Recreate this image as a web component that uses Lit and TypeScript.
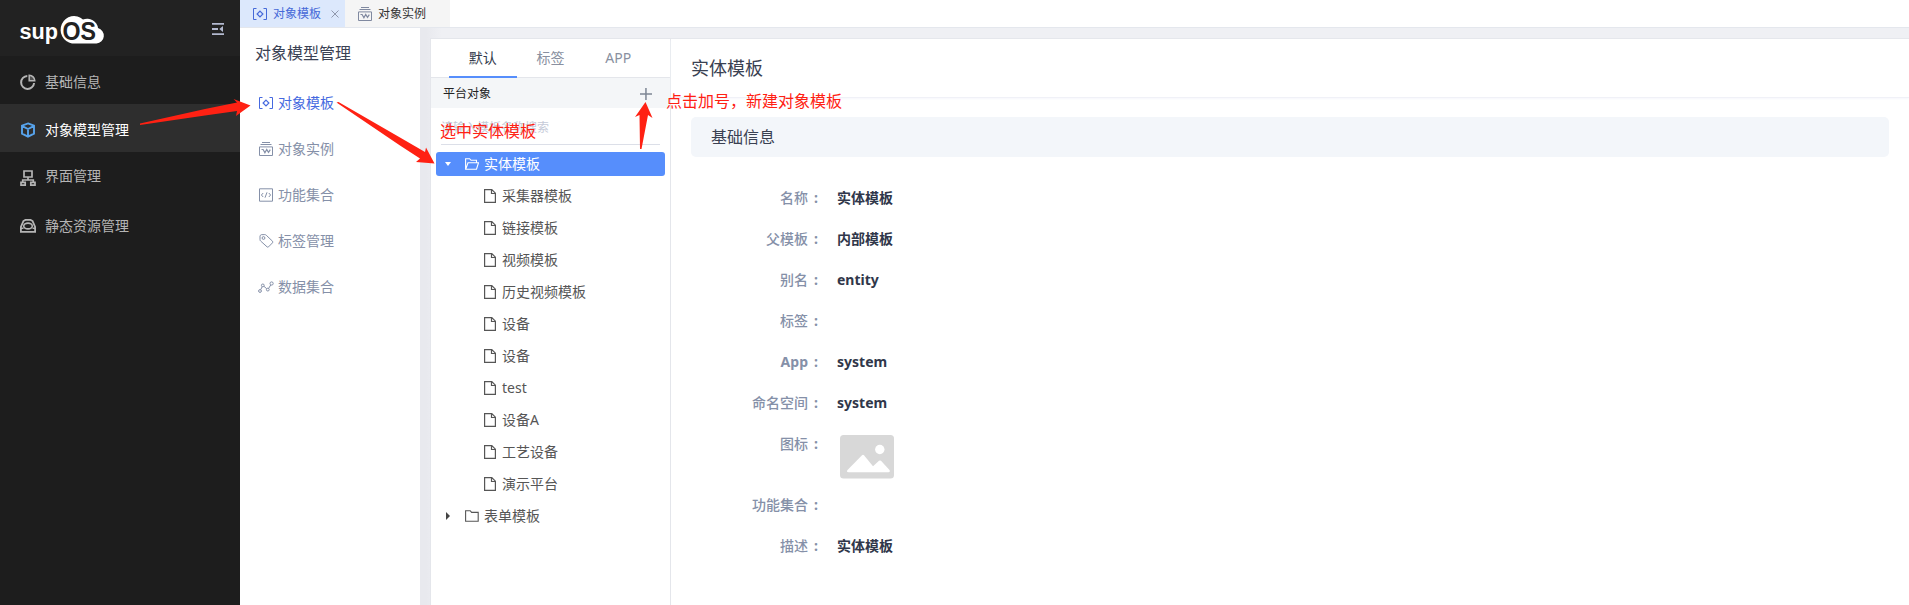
import { LitElement, html, css, svg } from "lit";
import { customElement } from "lit/decorators.js";

const icon = (name: string, w: number, h: number, body: unknown) =>
  html`<svg class="ico ${name}" width=${w} height=${h} viewBox="0 0 ${w} ${h}" fill="none" stroke="currentColor">${body}</svg>`;

const templateIcon = () => icon("template", 14, 12, svg`<path d="M3.5.5h-3v11h3M10.5.5h3v11h-3"/><path d="M7 3.1 9.9 6 7 8.9 4.1 6z" stroke-width="1.2"/>`);
const instanceIcon = () => icon("instance", 14, 14, svg`<path d="M3 .5h8M1.5 2.5h11M.5 4.9h13v8.6H.5z"/><path d="m2.500 7.500 1.600 0 1.800 3.200 1.800-3.300 1.800 3 1.800-2.800" stroke-width="1.200"/>`);
const codeIcon = () => icon("code", 14, 14, svg`<path d="M.5.8h13v12.400H.5z"/><path d="M4.200 5 2.400 7l1.800 2M9.800 5l1.800 2-1.800 2M8 4.300 6 9.700"/>`);
const tagIcon = () => icon("tag", 15, 14, svg`<path d="M1 5.600V2.100Q1.200 1 2.300.7l3.500-.1q.8 0 1.400.6l6.300 6q.7.8 0 1.600l-3.900 4q-.8.8-1.600 0L1.600 7Q1 6.400 1 5.600z"/><circle cx="4.500" cy="4" r="1.400"/>`);
const graphIcon = () => icon("graph", 16, 12, svg`<circle cx="2" cy="10" r="1.400"/><circle cx="4.800" cy="4.400" r="1.400"/><circle cx="9.800" cy="8.600" r="1.400"/><circle cx="13.600" cy="2.500" r="1.600"/><path d="m2.700 8.700 1.500-3M5.900 5.300l2.800 2.400M10.600 7.400l2.200-3.500"/>`);
const pieIcon = () => icon("pie", 16, 16, svg`<path d="M7.300 1.900A6.500 6.500 0 1 0 14.100 9" stroke-width="2"/><path d="M9.200 1.200v5.600h5.600A5.800 5.800 0 0 0 9.200 1.200z" stroke-width="1.500" fill="currentColor" fill-opacity=".35"/>`);
const cubeIcon = () => icon("cube", 16, 16, svg`<path d="M8 1.400 14 3.600v8L8 14.600 2 11.600v-8zM2.300 4.200 8 7l5.700-2.800M8 7v7" stroke-width="1.900"/>`);
const orgIcon = () => icon("org", 16, 16, svg`<path d="M4 1h8v6H4zM8 7v2.700M2.700 12.500V10h10.600v2.500M1 12.400h4.200v2.700H1zM10.800 12.400H15v2.700h-4.200z" stroke-width="1.700"/>`);
const trayIcon = () => icon("tray", 16, 14, svg`<path d="M.9 8v4.900h14.200V8L12.600 2.100 10.600.9H5.400l-2 1.200z" stroke-width="1.800"/><path d="M1 9.300h2.500M12.500 9.300H15" stroke-width="1.400"/><ellipse cx="8" cy="7" rx="4.300" ry="2.900" stroke-width="1.600"/>`);
const fileIcon = () => icon("file", 12, 14, svg`<path d="M.6.6h7.200l3.600 3.600v9.200H.6zM7.500.8v3.700h3.700" stroke-width="1.200"/>`);
const folderIcon = () => icon("folder", 14, 12, svg`<path d="M.6.700h4.600l1.400 1.700h6.600v8.900H.6z" stroke-width="1.100"/>`);
const folderOpenIcon = () => icon("folder-open", 14, 12, svg`<path d="M.6 11.200V.700h4l1.400 1.600h5.500v2.300M.7 11.200 3 4.700h10.500l-2 6.500z" stroke-width="1.100"/>`);

@customElement("app-root")
export class AppRoot extends LitElement {
  static styles = css`
    :host { display: block; position: relative; width: 1909px; height: 605px; overflow: hidden; background: #fff;
      font-family: "Noto Sans", "Noto Sans CJK SC", sans-serif; font-size: 14px; line-height: 20px; color: #565656; }
    * { box-sizing: border-box; }
    .ico { display: block; flex: none; }
    .shell { display: flex; height: 605px; white-space: nowrap; }
    .side { width: 240px; flex: none; background: #1d1d1d; color: #b5b5b5; }
    .brand { height: 56px; background: #222; display: flex; justify-content: space-between; padding: 0 16px 0 19px; }
    .logo { display: block; }
    .fold { display: block; margin-top: 23px; color: #b3b9cf; }
    .item { display: flex; align-items: center; height: 48px; padding: 4px 0 0 20px; gap: 9px; }
    .item.short { height: 44px; } .item.tall { height: 56px; }
    .item.on { background: #2e2e2e; color: #fff; }
    .item.on .ico { color: #57a3ec; }
    .item.short .ico { margin-top: 3px; }
    .main { flex: 1; display: flex; flex-direction: column; min-width: 0; }
    .tabs { display: flex; height: 28px; border-bottom: 1px solid #e4e7ed; font-size: 12px; color: #333; }
    .tab { display: flex; align-items: center; width: 105px; padding: 0 0 0 13px; background: #f5f5f5; gap: 6px; }
    .tab.on { background: #dce8fc; color: #4569d8; }
    .tab .instance { color: #8089a0; }
    .close { margin-left: 4px; color: #9098ac; }
    .body { flex: 1; display: flex; }
    .nav { width: 180px; color: #8590a8; padding: 14px 0 0 19px; }
    .nav h2 { margin: 0 0 28px -4px; font: inherit; font-size: 16px; line-height: 22px; color: #3b4254; }
    .link { display: flex; align-items: center; height: 22px; margin-bottom: 24px; gap: 5px; }
    .link.on { color: #4569e0; }
    .link .graph { margin: 0 -1px 0 -1px; } .link .tag { margin-right: -1px; }
    .work { flex: 1; display: flex; background: linear-gradient(90deg, #e8e9ee 0, #e8e9ee 6px, #eff0f4 22px); padding: 10px 0 0 10px; }
    .tree { width: 241px; flex: none; background: #fff; border: 1px solid #e4e6eb; border-width: 1px 1px 0 1px; }
    .modes { display: flex; height: 39px; padding: 0 18px; border-bottom: 1px solid #e4e6eb; color: #8990a0; }
    .mode { width: 68px; height: 39px; text-align: center; line-height: 38px; }
    .mode.on { color: #333b4c; border-bottom: 2px solid #568efc; }
    .group { display: flex; justify-content: space-between; align-items: center; height: 30px; padding: 1px 18px 0 12px; background: #f4f6f8; font-size: 12px; color: #222; }
    .group svg { color: #7d8694; }
    .search { margin: 10px 10px 7px; height: 27px; padding-top: 2px; border-bottom: 1px solid #dcdfe8; font-size: 12px; line-height: 16px; color: #c5cad8; }
    .node { display: flex; align-items: center; height: 24px; margin: 0 5px 8px 5px; border-radius: 3px; padding-left: 48px; gap: 6px; }
    .node.root { padding-left: 9px; gap: 5px; }
    .node.root .folder, .node.root .folder-open { margin-left: 9px; }
    .node.on { background: #568efc; color: #fff; }
    .detail { flex: 1; background: #fff; border-top: 1px solid #e4e6eb; color: #3a4152; }
    .title { height: 59px; padding-left: 20px; font-size: 18px; line-height: 59px; border-bottom: 1px solid #f0f1f7; box-shadow: 0 1px 2px #f6f7fc; }
    .section { height: 40px; margin: 19px 20px 21px; padding-left: 20px; border-radius: 5px; background: #f3f6fa; font-size: 16px; line-height: 41px; }
    .row { display: flex; height: 41px; line-height: 40px; font-weight: 700; color: #30374a; }
    .row.pic { height: 61px; }
    .key { width: 137px; text-align: right; color: #8590a8; font-weight: 500; }
    .key.lat { font-weight: 700; }
    .colon { width: 9px; padding-left: 6px; color: #8590a8; }
    .val { padding-left: 20px; }
    .val.cjk { font-weight: 600; }
    .photo { display: block; margin: 11px 0 0 23px; }
    .notes { position: absolute; left: 0; top: 0; pointer-events: none; }
    .note { position: absolute; font-size: 16px; line-height: 22px; color: #ff2113; white-space: nowrap; }
    .pick { left: 440px; top: 120px; }
    .add { left: 666px; top: 90px; }
  `;

  private side = [
    { t: "基础信息", i: pieIcon, c: "" },
    { t: "对象模型管理", i: cubeIcon, c: "on" },
    { t: "界面管理", i: orgIcon, c: "short" },
    { t: "静态资源管理", i: trayIcon, c: "tall" },
  ];
  private links = [
    { t: "对象模板", i: templateIcon, c: "on" },
    { t: "对象实例", i: instanceIcon, c: "" },
    { t: "功能集合", i: codeIcon, c: "" },
    { t: "标签管理", i: tagIcon, c: "" },
    { t: "数据集合", i: graphIcon, c: "" },
  ];
  private nodes = ["采集器模板", "链接模板", "视频模板", "历史视频模板", "设备", "设备", "test", "设备A", "工艺设备", "演示平台"];
  private rows = [
    ["名称", "实体模板"], ["父模板", "内部模板"], ["别名", "entity"], ["标签", ""], ["App", "system"],
    ["命名空间", "system"], ["图标", "*"], ["功能集合", ""], ["描述", "实体模板"],
  ];

  private value(v: string) {
    if (v === "*")
      return html`<svg class="photo" width="54" height="44" viewBox="0 0 54 44"><rect width="54" height="43.500" rx="3.500" fill="#d8d8d8"/><circle cx="39.800" cy="14.500" r="4.700" fill="#fff"/><path d="M7.500 35 22 20.200q1-.8 2 0L33 31.300l6-5.500q1-.8 2 0l8.500 9.200q1 2-1 2.200H8.500Q6 37 7.500 35z" fill="#fff"/></svg>`;
    return html`<div class="val ${/[a-z]/.test(v) ? "" : "cjk"}">${v}</div>`;
  }

  render() {
    return html`
      <div class="shell">
        <aside class="side">
          <div class="brand">
            <svg class="logo" width="90" height="56" viewBox="0 0 90 56" font-family="Liberation Sans, sans-serif" font-weight="700">
              <path d="M53 43.500A13.500 13.800 0 1 1 64 19.500 11 10.500 0 0 1 79 28 7.900 7.900 0 0 1 77.500 43.500z" fill="#fff"/>
              <text x=".5" y="39.300" font-size="22" textLength="38.500" lengthAdjust="spacingAndGlyphs" fill="#fff">sup</text>
              <text x="43.500" y="39.500" font-size="25" textLength="33.500" lengthAdjust="spacingAndGlyphs" fill="#222">OS</text>
            </svg>
            <svg class="fold" width="12" height="12" viewBox="0 0 12 12" fill="currentColor"><path d="M0 0h12v1.800H0zM0 5.100h6v1.800H0zM0 10.200h12V12H0zM11 2.900v6.200L7.300 6z"/></svg>
          </div>
          ${this.side.map((s) => html`<div class="item ${s.c}">${s.i()}<span>${s.t}</span></div>`)}
        </aside>
        <div class="main">
          <div class="tabs">
            <div class="tab on">${templateIcon()}<span>对象模板</span>
              <svg class="close" width="8" height="8" viewBox="0 0 8 8" stroke="currentColor"><path d="m.5.5 7 7m0-7-7 7"/></svg></div>
            <div class="tab">${instanceIcon()}<span>对象实例</span></div>
          </div>
          <div class="body">
            <nav class="nav"><h2>对象模型管理</h2>
              ${this.links.map((s) => html`<div class="link ${s.c}">${s.i()}<span>${s.t}</span></div>`)}
            </nav>
            <div class="work">
              <div class="tree">
                <div class="modes"><div class="mode on">默认</div><div class="mode">标签</div><div class="mode">APP</div></div>
                <div class="group"><span>平台对象</span><svg width="12" height="12" viewBox="0 0 12 12" fill="currentColor"><path d="M5.200 0h1.500v12H5.200zM0 5.200h12v1.500H0z"/></svg></div>
                <div class="search">请输入模板名称搜索</div>
                <div class="node root on"><svg width="6" height="4" viewBox="0 0 6 4"><path d="M0 0h6L3 4z" fill="#fff"/></svg>${folderOpenIcon()}<span>实体模板</span></div>
                ${this.nodes.map((n) => html`<div class="node">${fileIcon()}<span>${n}</span></div>`)}
                <div class="node root"><svg width="6" height="8" viewBox="0 0 6 8"><path d="M1 0v8l4-4z" fill="#444"/></svg>${folderIcon()}<span>表单模板</span></div>
              </div>
              <section class="detail">
                <div class="title">实体模板</div>
                <div class="section">基础信息</div>
                ${this.rows.map(([k, v]) => html`<div class="row ${v === "*" ? "pic" : ""}"><div class="key ${k === "App" ? "lat" : ""}">${k}</div><span class="colon">:</span>${this.value(v)}</div>`)}
              </section>
            </div>
          </div>
        </div>
      </div>
      <svg class="notes" width="900" height="200" viewBox="0 0 900 200" fill="#ff2113">
        <path d="M140 123.500 205 109l32-6.500-3.500-3.500 17 6.500L236 116l1-5-32 4.500-65 9.500z"/>
        <path d="m336.500 102.500 2-.5L400 137.500l25 14.500 1-4.500 8.500 16-18.500-1.500 4-3.500-20-13z"/>
        <path d="m645.500 102 7 16-4.500-3-6.500 34h-1.500l-.5-34-4.500 2z"/>
      </svg>
      <div class="note pick">选中实体模板</div>
      <div class="note add">点击加号，新建对象模板</div>
    `;
  }
}
